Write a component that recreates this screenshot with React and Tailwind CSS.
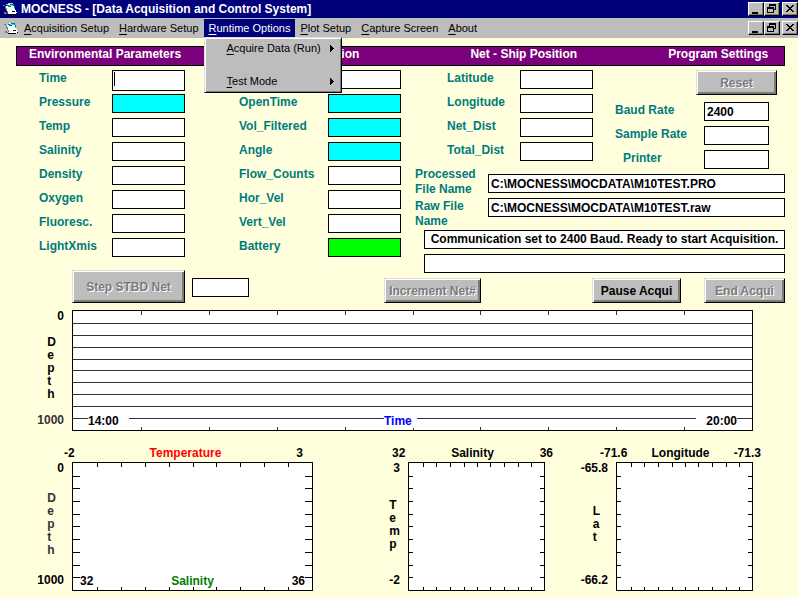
import { useState } from 'react';
import clsx from 'clsx';

const envFields = ['Time', 'Pressure', 'Temp', 'Salinity', 'Density', 'Oxygen', 'Fluoresc.', 'LightXmis'];
const netFields = ['OpenTime', 'Vol_Filtered', 'Angle', 'Flow_Counts', 'Hor_Vel', 'Vert_Vel', 'Battery'];
const positionFields = ['Latitude', 'Longitude', 'Net_Dist', 'Total_Dist'];

const fieldColors = {
  Pressure: 'bg-[#00ffff]',
  OpenTime: 'bg-[#00ffff]',
  Vol_Filtered: 'bg-[#00ffff]',
  Angle: 'bg-[#00ffff]',
  Battery: 'bg-[#00ff00]',
};

function AppIcon() {
  return (
    <svg width="15" height="14" viewBox="0 0 15 14" shapeRendering="crispEdges" aria-hidden="true">
      <path d="M4 2h7v3h1v3h1v4H5v-1H4V9H3V6H2V4h2z" fill="#ffffff" />
      <path d="M2 4h1v2h1v3h1v2H4V9H3V7H2z" fill="#7b7b7b" />
      <path d="M5 1h5v1H5zM3 2h2v1H3z" fill="#bdbdbd" />
      <path d="M4 3h3V2h4v2h1v2h-1V4H8v1H5z" fill="#007b7b" />
      <path d="M6 3h4v1H6zM11 6h1v1h-1z" fill="#00ffff" />
      <path d="M0 3h2v1H0zM1 10h2v1h1v1H1z" fill="#7b7b7b" />
      <path d="M9 9h3v1H9zM4 12h8v1H4zM13 11h1v1h-1z" fill="#000000" />
      <path d="M12 10h2v1h-2z" fill="#ffffff" />
    </svg>
  );
}

function WindowButton({ label, children }) {
  return (
    <button
      type="button"
      aria-label={label}
      className="h-[14px] w-4 border border-t-white border-l-white border-r-black border-b-black bg-[#bdbdbd] shadow-[inset_-1px_-1px_0_#7b7b7b]"
    >
      <svg width="14" height="12" viewBox="0 0 14 12" shapeRendering="crispEdges" className="block">
        {children}
      </svg>
    </button>
  );
}

function WindowButtons() {
  return (
    <div className="ml-auto flex">
      <WindowButton label="Minimize">
        <path d="M3 9h6v2H3z" />
      </WindowButton>
      <WindowButton label="Restore">
        <path d="M4 1h7v6H9V6h1V3H5v1H4zM2 4h7v6H2zM3 6v3h5V6z" fillRule="evenodd" />
      </WindowButton>
      <div className="w-[2px]" />
      <WindowButton label="Close">
        <path d="M3 2h2v1h1v1h2V3h1V2h2v1h-1v1H9v1H8v1h1v1h1v1h1v1H9V8H8V7H6v1H5v1H3V8h1V7h1V6h1V5H5V4H4V3H3z" />
      </WindowButton>
    </div>
  );
}

function MenuLabel({ text }) {
  return (
    <>
      <span className="underline underline-offset-2">{text[0]}</span>
      {text.slice(1)}
    </>
  );
}

function MenuItem({ text, open, onClick }) {
  return (
    <button
      type="button"
      onClick={onClick}
      className={clsx('h-[18px] px-[5px] whitespace-nowrap', open && 'bg-[#00007b] text-white')}
    >
      <MenuLabel text={text} />
    </button>
  );
}

function SubmenuItem({ text }) {
  return (
    <button type="button" className="flex h-[17px] w-full items-center justify-between pr-[7px] pl-[22px]">
      <span>
        <MenuLabel text={text} />
      </span>
      <svg width="4" height="7" viewBox="0 0 4 7" shapeRendering="crispEdges" aria-hidden="true">
        <path d="M0 0h1v1h1v1h1v1h1v1H3v1H2v1H1v1H0z" />
      </svg>
    </button>
  );
}

function TextBox({ className, ...props }) {
  return (
    <input
      type="text"
      className={clsx('min-w-0 border border-black px-[2px] text-black outline-none', className)}
      {...props}
    />
  );
}

function Field({ name, labelClass }) {
  return (
    <div className="flex h-6 items-start">
      <label htmlFor={name} className={clsx('shrink-0 leading-4 text-[#007b7b]', labelClass)}>
        {name}
      </label>
      <TextBox
        id={name}
        defaultValue={name === 'Baud Rate' ? '2400' : ''}
        className={clsx('flex-1', name === 'Time' ? 'h-[21px]' : 'h-[19px]', fieldColors[name] || 'bg-white')}
      />
    </div>
  );
}

function PushButton({ className, disabled, children }) {
  return (
    <button
      type="button"
      disabled={disabled}
      className={clsx(
        'border border-t-[#dedede] border-l-[#dedede] border-r-black border-b-black bg-[#bdbdbd] whitespace-nowrap',
        'shadow-[inset_1px_1px_0_#ffffff,inset_-2px_-2px_0_#7b7b7b]',
        disabled ? 'text-[#7b7b7b] [text-shadow:1px_1px_0_#ffffff]' : 'text-black',
        className
      )}
    >
      {children}
    </button>
  );
}

function Axis({ top, title, bottom, className, titleClass, bottomClass }) {
  return (
    <div className={clsx('flex shrink-0 flex-col items-end justify-between pr-2 pb-1 leading-[13px]', className)}>
      <span>{top}</span>
      <span className={clsx('flex flex-col', titleClass)}>
        {title.split('').map((letter, i) => (
          <span key={i}>{letter}</span>
        ))}
      </span>
      <span className={bottomClass}>{bottom}</span>
    </div>
  );
}

const rowLines = [13, 25, 37, 49, 60, 72, 84, 96, 108];
const timeTicks = [69, 137, 205, 273, 341, 408, 476, 544, 612];

function TimePlot() {
  return (
    <div className="relative flex h-[121px] flex-1 items-end justify-between border border-black bg-white px-[15px] pb-[2px]">
      <svg
        className="absolute inset-0 h-full w-full"
        viewBox="0 0 679 119"
        preserveAspectRatio="none"
        shapeRendering="crispEdges"
        fill="#333333"
      >
        {rowLines.map((y) => (
          <rect key={y} x="0" y={y - 1} width="679" height="1" />
        ))}
        {timeTicks.map((x) => (
          <path key={x} d={`M${x - 1} 0h1v4h-1zM${x - 1} 116h1v3h-1z`} />
        ))}
      </svg>
      <span className="relative w-[41px] bg-white leading-[14px]">14:00</span>
      <span className="relative mr-6 w-[33px] bg-white leading-[14px] text-[#0000ff]">Time</span>
      <span className="relative w-[41px] bg-white text-right leading-[14px]">20:00</span>
    </div>
  );
}

const sideTicks = [14, 26, 39, 52, 64, 77, 90, 103, 115];

function ScatterPlot({ width, ticks, sideLength, children }) {
  return (
    <div className="relative flex h-[129px] items-end justify-between border border-black bg-white px-[7px] pb-[2px]">
      <svg
        className="absolute inset-0 h-full w-full"
        viewBox={`0 0 ${width} 127`}
        preserveAspectRatio="none"
        shapeRendering="crispEdges"
      >
        {ticks.map((x) => (
          <path key={x} d={`M${x - 1} 0h1v4h-1zM${x - 1} 124h1v3h-1z`} />
        ))}
        {sideTicks.map((y) => (
          <path
            key={y}
            d={`M0 ${y - 1}h${sideLength}v1H0zM${width - sideLength} ${y - 1}h${sideLength}v1h-${sideLength}z`}
          />
        ))}
      </svg>
      {children}
    </div>
  );
}

const wideTicks = [25, 49, 73, 97, 121, 144, 168, 192, 216];
const squareTicks = [15, 28, 42, 56, 69, 82, 96, 110, 123];

export default function App() {
  const [menuOpen, setMenuOpen] = useState(true);

  return (
    <div className="min-h-screen bg-[#ffffde] font-['Liberation_Sans',Arial,sans-serif] text-[12px] font-bold text-black">
      <header className="flex h-[18px] items-center bg-[#00007b] pl-[3px] text-white">
        <AppIcon />
        <h1 className="ml-[3px] leading-4 whitespace-nowrap">MOCNESS - [Data Acquisition and Control System]</h1>
        <WindowButtons />
      </header>

      <nav className="flex h-5 items-center bg-[#bdbdbd] pl-1 text-[11px] font-normal">
        <AppIcon />
        <MenuItem text="Acquisition Setup" />
        <MenuItem text="Hardware Setup" />
        <div className="relative">
          <MenuItem text="Runtime Options" open={menuOpen} onClick={() => setMenuOpen(!menuOpen)} />
          {menuOpen && (
            <div className="absolute top-[18px] left-0 z-10 flex h-14 w-[138px] flex-col justify-between border border-t-[#dedede] border-l-[#dedede] border-r-black border-b-black bg-[#bdbdbd] py-[2px] shadow-[inset_1px_1px_0_#ffffff,inset_-1px_-1px_0_#7b7b7b]">
              <SubmenuItem text="Acquire Data (Run)" />
              <SubmenuItem text="Test Mode" />
            </div>
          )}
        </div>
        <MenuItem text="Plot Setup" />
        <MenuItem text="Capture Screen" />
        <MenuItem text="About" />
        <WindowButtons />
      </nav>

      <main className="pt-2 pb-[7px]">
        <div className="mr-[13px] ml-4 grid h-5 grid-cols-[242fr_200fr_198fr_116fr] border border-black bg-[#7b007b] pl-3 leading-[15px] whitespace-nowrap text-white">
          <h2>Environmental Parameters</h2>
          <h2>Net Information</h2>
          <h2>Net - Ship Position</h2>
          <h2>Program Settings</h2>
        </div>

        <div className="mt-1 grid grid-cols-[minmax(0,200fr)_minmax(0,176fr)_minmax(0,370fr)] pr-[13px] pl-[39px]">
          <div className="relative pr-[54px]">
            {envFields.map((name) => (
              <Field key={name} name={name} labelClass="w-[73px]" />
            ))}
            <span className="absolute top-[2px] left-[75px] h-[14px] w-px bg-black" />
          </div>
          <div className="pr-[14px]">
            <div className="flex h-6 items-start pl-[89px]">
              <TextBox aria-label="Net" className="h-[19px] flex-1 bg-white" />
            </div>
            {netFields.map((name) => (
              <Field key={name} name={name} labelClass="w-[89px]" />
            ))}
          </div>
          <div>
            <div className="grid grid-cols-[minmax(0,178fr)_minmax(0,192fr)]">
              <div className="pl-8">
                {positionFields.map((name) => (
                  <Field key={name} name={name} labelClass="w-[73px]" />
                ))}
              </div>
              <div className="flex flex-col pl-[22px]">
                <PushButton disabled className="mr-2 mb-[7px] h-[25px] w-[81px] self-end">
                  Reset
                </PushButton>
                <div className="pr-4">
                  <Field name="Baud Rate" labelClass="w-[89px]" />
                  <Field name="Sample Rate" labelClass="w-[89px]" />
                  <Field name="Printer" labelClass="w-[89px] pl-2" />
                </div>
              </div>
            </div>
            <div className="flex">
              <div className="-mt-[7px] flex w-[73px] shrink-0 flex-col gap-[2px] leading-[15px] text-[#007b7b]">
                <label htmlFor="processed">Processed File Name</label>
                <label htmlFor="raw">Raw File Name</label>
              </div>
              <div className="flex min-w-0 flex-1 flex-col gap-[5px]">
                <TextBox id="processed" defaultValue="C:\MOCNESS\MOCDATA\M10TEST.PRO" className="h-[19px] bg-white" />
                <TextBox id="raw" defaultValue="C:\MOCNESS\MOCDATA\M10TEST.raw" className="h-[19px] bg-white" />
              </div>
            </div>
            <div className="mt-px flex flex-col gap-[5px] pl-[9px]">
              <output className="h-[19px] border border-black bg-white text-center leading-[17px] whitespace-nowrap">
                Communication set to 2400 Baud. Ready to start Acquisition.
              </output>
              <output className="h-[19px] border border-black bg-white" />
            </div>
          </div>
        </div>

        <div className="-mt-[3px] flex items-end justify-between pr-[13px] pl-[72px]">
          <div className="flex">
            <PushButton disabled className="h-[33px] w-[113px]">
              Step STBD Net
            </PushButton>
            <TextBox aria-label="Net number" className="mt-2 ml-[7px] h-[19px] w-[57px] bg-white" />
          </div>
          <PushButton disabled className="ml-6 h-[25px] w-[97px]">
            Increment Net#
          </PushButton>
          <div className="flex gap-[23px]">
            <PushButton className="h-[25px] w-[89px]">Pause Acqui</PushButton>
            <PushButton disabled className="h-[25px] w-[81px]">
              End Acqui
            </PushButton>
          </div>
        </div>

        <section className="mt-[7px] flex pr-[45px]">
          <Axis top="0" title="Depth" bottom="1000" className="w-[72px]" titleClass="pr-2" bottomClass="text-[#333333]" />
          <TimePlot />
        </section>

        <section className="mt-[15px] flex items-end pr-[45px]">
          <Axis top="0" title="Depth" bottom="1000" className="h-[129px] w-[72px]" titleClass="pr-2 text-[#333333]" />
          <div className="flex-[241]">
            <div className="-ml-2 flex justify-between pr-[10px] pb-px leading-[15px]">
              <span>-2</span>
              <span className="text-[#ff0000]">Temperature</span>
              <span>3</span>
            </div>
            <ScatterPlot width={239} ticks={wideTicks} sideLength={7}>
              <span className="leading-[14px]">32</span>
              <span className="leading-[14px] text-[#007b00]">Salinity</span>
              <span className="leading-[14px]">36</span>
            </ScatterPlot>
          </div>
          <Axis top="3" title="Temp" bottom="-2" className="h-[129px] w-[95px]" />
          <div className="flex-[137]">
            <div className="-mr-2 -ml-4 flex justify-between pb-px leading-[15px]">
              <span>32</span>
              <span>Salinity</span>
              <span>36</span>
            </div>
            <ScatterPlot width={135} ticks={squareTicks} sideLength={4} />
          </div>
          <Axis top="-65.8" title="Lat" bottom="-66.2" className="h-[129px] w-[71px]" titleClass="pr-2" />
          <div className="flex-[137]">
            <div className="-mr-2 -ml-4 flex justify-between pb-px leading-[15px]">
              <span>-71.6</span>
              <span>Longitude</span>
              <span>-71.3</span>
            </div>
            <ScatterPlot width={135} ticks={squareTicks} sideLength={4} />
          </div>
        </section>
      </main>
    </div>
  );
}
